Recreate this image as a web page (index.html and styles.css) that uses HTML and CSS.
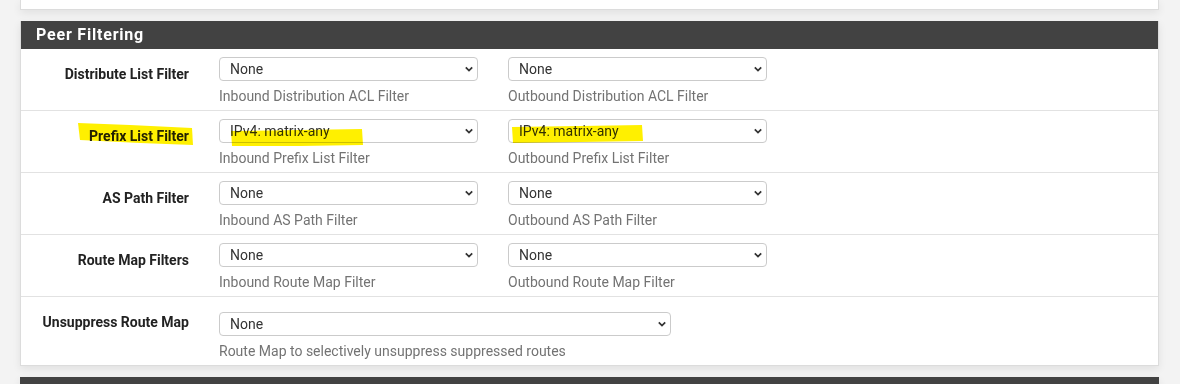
FILE: index.html
```html
<!DOCTYPE html>
<html lang="en">
<head>
    <meta charset="UTF-8">
    <title>BGP Neighbor - Peer Filtering</title>
    <link rel="stylesheet" href="styles.css">
</head>
<body>
    <div class="panel panel-top"></div>

    <div class="panel">
        <h2 class="panel-heading">Peer Filtering</h2>
        <div class="panel-body">
            <div class="form-row">
                <label class="row-label">Distribute List Filter</label>
                <div class="field">
                    <span class="select-wrap"><select><option>None</option></select><svg class="chev" viewBox="0 0 10 6"><path d="M1 1l4 4 4-4"/></svg></span>
                    <span class="help">Inbound Distribution ACL Filter</span>
                </div>
                <div class="field">
                    <span class="select-wrap"><select><option>None</option></select><svg class="chev" viewBox="0 0 10 6"><path d="M1 1l4 4 4-4"/></svg></span>
                    <span class="help">Outbound Distribution ACL Filter</span>
                </div>
            </div>

            <div class="form-row">
                <label class="row-label">Prefix List Filter</label>
                <div class="field">
                    <span class="select-wrap"><select><option>IPv4: matrix-any</option></select><svg class="chev" viewBox="0 0 10 6"><path d="M1 1l4 4 4-4"/></svg></span>
                    <span class="help">Inbound Prefix List Filter</span>
                </div>
                <div class="field">
                    <span class="select-wrap"><select><option>IPv4: matrix-any</option></select><svg class="chev" viewBox="0 0 10 6"><path d="M1 1l4 4 4-4"/></svg></span>
                    <span class="help">Outbound Prefix List Filter</span>
                </div>
            </div>

            <div class="form-row">
                <label class="row-label">AS Path Filter</label>
                <div class="field">
                    <span class="select-wrap"><select><option>None</option></select><svg class="chev" viewBox="0 0 10 6"><path d="M1 1l4 4 4-4"/></svg></span>
                    <span class="help">Inbound AS Path Filter</span>
                </div>
                <div class="field">
                    <span class="select-wrap"><select><option>None</option></select><svg class="chev" viewBox="0 0 10 6"><path d="M1 1l4 4 4-4"/></svg></span>
                    <span class="help">Outbound AS Path Filter</span>
                </div>
            </div>

            <div class="form-row">
                <label class="row-label">Route Map Filters</label>
                <div class="field">
                    <span class="select-wrap"><select><option>None</option></select><svg class="chev" viewBox="0 0 10 6"><path d="M1 1l4 4 4-4"/></svg></span>
                    <span class="help">Inbound Route Map Filter</span>
                </div>
                <div class="field">
                    <span class="select-wrap"><select><option>None</option></select><svg class="chev" viewBox="0 0 10 6"><path d="M1 1l4 4 4-4"/></svg></span>
                    <span class="help">Outbound Route Map Filter</span>
                </div>
            </div>

            <div class="form-row form-row-wide">
                <label class="row-label">Unsuppress Route Map</label>
                <div class="field field-wide">
                    <span class="select-wrap"><select><option>None</option></select><svg class="chev" viewBox="0 0 10 6"><path d="M1 1l4 4 4-4"/></svg></span>
                    <span class="help">Route Map to selectively unsuppress suppressed routes</span>
                </div>
            </div>
        </div>
    </div>

    <div class="panel panel-next"></div>

    <!-- marker highlights drawn over the screenshot -->
    <svg class="marker" width="1180" height="384" viewBox="0 0 1180 384">
        <polygon points="78,123 130,125 192,128 193,145 140,143 80,140"/>
        <polygon points="231,131 300,130 362,129 363,145 300,146 232,146"/>
        <polygon points="512,127 580,126 642,125 643,141 580,142 513,143"/>
    </svg>
</body>
</html>
```

FILE: styles.css
```css
body {
    margin: 0;
    background: #f3f3f3;
    font-family: Roboto, "Liberation Sans", sans-serif;
    font-size: 14px;
    color: #333;
    position: relative;
    height: 384px;
    overflow: hidden;
}
.panel {
    margin: 0 21px 0 20px;
    background: #fff;
    border: 1px solid #dcdcdc;
    border-top: 0;
    box-shadow: 0 3px 8px rgba(0, 0, 0, 0.08);
    margin-bottom: 11px;
}
.panel-top {
    height: 9px;
}
.panel-next {
    height: 20px;
    background: #424242;
    border-color: #424242;
    margin-bottom: 0;
}
.panel-heading {
    margin: 0;
    height: 28px;
    background: #424242;
    color: #fff;
    font-size: 16px;
    font-weight: bold;
    line-height: 28px;
    padding: 0 15px;
    letter-spacing: 0.8px;
}
.form-row {
    display: grid;
    grid-template-columns: 168px 259px 259px;
    column-gap: 30px;
    padding: 8px 0 5px;
    border-bottom: 1px solid #e2e2e2;
}
.form-row:last-child {
    border-bottom: 0;
}
.form-row-wide {
    padding-top: 15px;
}
.row-label {
    text-align: right;
    font-weight: bold;
    line-height: 17px;
    padding-top: 9px;
    color: #222;
}
.form-row-wide .row-label {
    padding-top: 2px;
}
.field {
    display: flex;
    flex-direction: column;
}
.field-wide {
    grid-column: 2 / 4;
    width: 452px;
}
.select-wrap {
    position: relative;
    display: block;
}
select {
    appearance: none;
    -webkit-appearance: none;
    width: 100%;
    height: 24px;
    border: 1px solid #cbcbcb;
    border-radius: 4px;
    background: #fff;
    font-family: inherit;
    font-size: 14px;
    color: #333;
    padding: 0 10px;
    margin: 0;
}
.chev {
    position: absolute;
    right: 5px;
    top: 9px;
    width: 8px;
    height: 6px;
    fill: none;
    stroke: #333;
    stroke-width: 2.2;
}
.help {
    margin-top: 7px;
    line-height: 17px;
    color: #737373;
    font-size: 14px;
}
.marker {
    position: absolute;
    left: 0;
    top: 0;
    mix-blend-mode: multiply;
    fill: #fff000;
}
```
